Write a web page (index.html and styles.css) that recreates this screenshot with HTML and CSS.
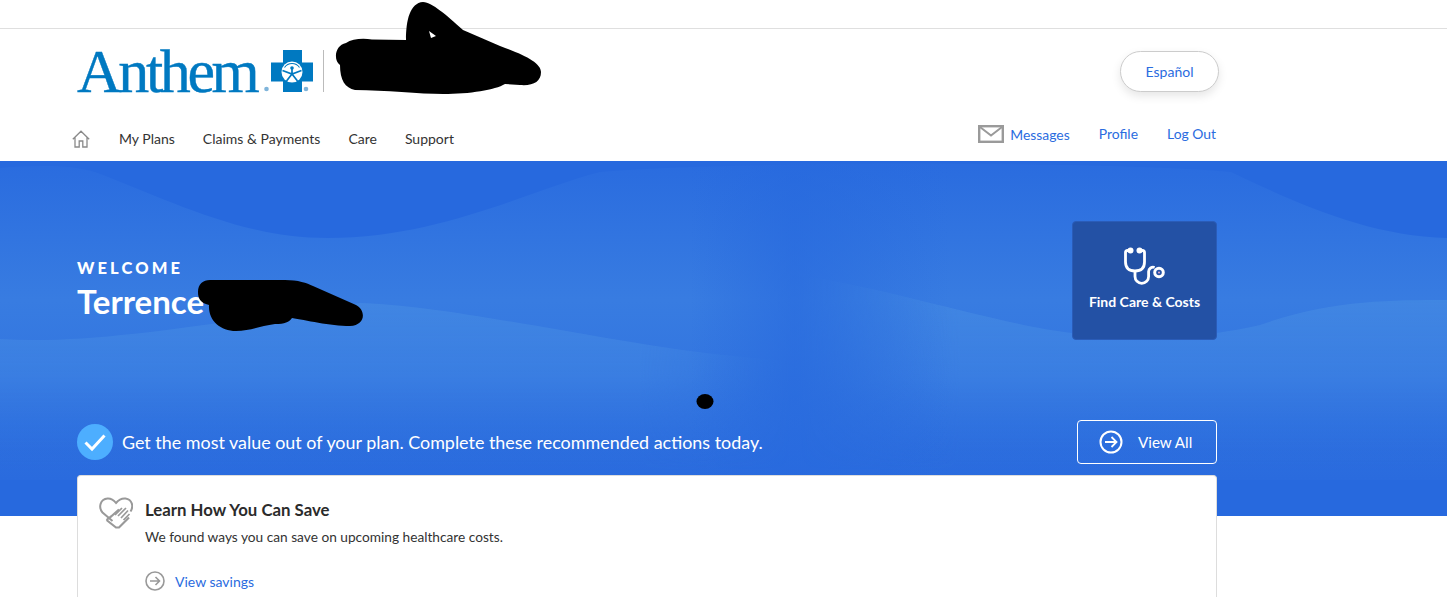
FILE: index.html
```html
<!DOCTYPE html>
<html>
  <head>
    <meta charset="utf-8" />
    <title>Anthem</title>
    <link rel="stylesheet" href="styles.css">
  </head>
  <body>
    <div class="topStrip"></div>

    <header class="header">
      <div class="wrap brandRow">
        <div class="brand">
          <span class="logoText">Anthem</span>
          <svg class="logoCross" width="58" height="42" viewBox="-8 0 58 42">
            <circle cx="-4.500" cy="39" r="2.300" fill="#7fb4da"/>
            <path d="M12 0h19v12.500h11v19h-11v10.500h-19v-10.500h-12v-19h12z" fill="#0079c1"/>
            <circle cx="21" cy="22" r="10.500" fill="#fff"/>
            <path d="M13.500 17.500a9 9 0 0 1 15 0" fill="none" stroke="#0079c1" stroke-width="1.100"/>
            <path d="M11.500 20.500 21 24l9.500-3.500M21 18v6M21 24l-5.500 7M21 24l5.500 7" fill="none" stroke="#0079c1" stroke-width="1.700"/>
            <circle cx="21" cy="18" r="1.800" fill="#0079c1"/>
            <circle cx="35" cy="39" r="2.300" fill="#7fb4da"/>
          </svg>
          <span class="brandLine"></span>
        </div>
        <button class="langBtn">Español</button>
      </div>

      <div class="wrap navRow">
        <nav class="mainNav">
          <svg class="homeIcon" width="18" height="18" viewBox="0 0 18 18">
            <path d="M.8 9.200 9 1.200l8.200 8M3 7.500v9.500h4.200v-6h3.600v6h4.200v-9.500" fill="none" stroke="#8a8a8a" stroke-width="1.300"/>
          </svg>
          <a href="#">My Plans</a>
          <a href="#">Claims &amp; Payments</a>
          <a href="#">Care</a>
          <a href="#">Support</a>
        </nav>
        <div class="userNav">
          <a href="#" class="msgLink">
            <svg width="26" height="18" viewBox="0 0 26 18">
              <rect x="1.200" y="1.200" width="23.600" height="15.600" fill="none" stroke="#9a9a9a" stroke-width="2.400"/>
              <path d="M2 2l11 8.500L24 2" fill="none" stroke="#9a9a9a" stroke-width="2"/>
            </svg>
            <span>Messages</span>
          </a>
          <a href="#">Profile</a>
          <a href="#">Log Out</a>
        </div>
      </div>
    </header>

    <section class="hero">
      <svg class="heroBg" width="1447" height="355" viewBox="0 161 1447 355" preserveAspectRatio="none">
        <defs>
          <linearGradient id="bandFade" x1="0" y1="165" x2="0" y2="480" gradientUnits="userSpaceOnUse">
            <stop offset="0" stop-color="#2a6cdf"/>
            <stop offset="0.43" stop-color="#387ce1"/>
            <stop offset="1" stop-color="#2a6bde"/>
          </linearGradient>
          <linearGradient id="lowFade" x1="0" y1="300" x2="0" y2="470" gradientUnits="userSpaceOnUse">
            <stop offset="0" stop-color="#4287e2" stop-opacity="0.9"/>
            <stop offset="0.45" stop-color="#3c80e2" stop-opacity="0.8"/>
            <stop offset="1" stop-color="#2a6bde" stop-opacity="0"/>
          </linearGradient>
          <linearGradient id="leftSide" x1="640" y1="0" x2="790" y2="0" gradientUnits="userSpaceOnUse">
            <stop offset="0" stop-color="#fff"/>
            <stop offset="1" stop-color="#000"/>
          </linearGradient>
          <linearGradient id="rightSide" x1="800" y1="0" x2="960" y2="0" gradientUnits="userSpaceOnUse">
            <stop offset="0" stop-color="#000"/>
            <stop offset="1" stop-color="#fff"/>
          </linearGradient>
          <linearGradient id="gap" x1="690" y1="0" x2="950" y2="0" gradientUnits="userSpaceOnUse">
            <stop offset="0" stop-color="#2769de" stop-opacity="0"/>
            <stop offset="0.4" stop-color="#2769de" stop-opacity="0.6"/>
            <stop offset="1" stop-color="#2769de" stop-opacity="0"/>
          </linearGradient>
          <mask id="leftMask" maskUnits="userSpaceOnUse" x="0" y="161" width="1447" height="355">
            <rect x="0" y="161" width="1447" height="355" fill="url(#leftSide)"/>
          </mask>
          <mask id="rightMask" maskUnits="userSpaceOnUse" x="0" y="161" width="1447" height="355">
            <rect x="0" y="161" width="1447" height="355" fill="url(#rightSide)"/>
          </mask>
        </defs>
        <rect x="0" y="161" width="1447" height="355" fill="#2769de"/>
        <path d="M0 168C40 165 70 165 95 172C170 200 240 238 328 238C440 238 530 190 600 172C700 162 1100 160 1231 172C1300 205 1370 236 1447 238V480H0Z" fill="url(#bandFade)"/>
        <path d="M0 339C90 345 200 325 360 303C450 305 620 345 724 355L800 362V480H0Z" fill="url(#lowFade)" mask="url(#leftMask)"/>
        <path d="M780 272C880 285 1000 325 1072 333C1140 345 1217 335 1260 325C1330 300 1390 300 1447 300V480H780Z" fill="url(#lowFade)" mask="url(#rightMask)"/>
        <rect x="690" y="161" width="260" height="320" fill="url(#gap)"/>
      </svg>

      <div class="wrap heroTop">
        <div class="greeting">
          <div class="welcome">WELCOME</div>
          <div class="name">Terrence</div>
        </div>
        <a href="#" class="findCare">
          <svg width="42" height="40" viewBox="0 0 42 40">
            <path d="M6 4.500H3.500Q1.500 4.500 1.500 6.500V16Q1.500 25 11 25T20.500 16V6.500Q20.500 4.500 18.500 4.500H16" fill="none" stroke="#fff" stroke-width="2.800" stroke-linecap="round"/>
            <circle cx="6.500" cy="4.500" r="3" fill="#fff"/>
            <circle cx="15.500" cy="4.500" r="3" fill="#fff"/>
            <path d="M11 25v5.500a6.800 6.800 0 0 0 13.600 0v-5a4.500 4.500 0 0 1 6-4" fill="none" stroke="#fff" stroke-width="2.800"/>
            <circle cx="35" cy="26.500" r="4.300" fill="none" stroke="#fff" stroke-width="3"/>
            <circle cx="35" cy="26.500" r="1" fill="#e9a9c8"/>
          </svg>
          <span>Find Care &amp; Costs</span>
        </a>
      </div>

      <div class="wrap actionRow">
        <div class="actionText">
          <svg width="36" height="36" viewBox="0 0 36 36">
            <circle cx="18" cy="18" r="18" fill="#4daeff"/>
            <path d="M8.500 18.500l6.500 6.500L27.500 11.500" fill="none" stroke="#fff" stroke-width="3"/>
          </svg>
          <span>Get the most value out of your plan. Complete these recommended actions today.</span>
        </div>
        <a href="#" class="viewAll">
          <svg width="24" height="24" viewBox="0 0 24 24">
            <circle cx="12" cy="12" r="10.500" fill="none" stroke="#fff" stroke-width="2"/>
            <path d="M6 12h11.500M12.500 7l5 5-5 5" fill="none" stroke="#fff" stroke-width="1.800"/>
          </svg>
          <span>View All</span>
        </a>
      </div>

      <div class="wrap card">
        <svg class="heartIcon" width="34" height="32" viewBox="0 0 34 32">
          <path d="M13.500 24 3.500 15.500C-1 10 1.500 2 8.500 1.500 12.500 1.200 15 3.500 17 6 19.500 3 22.500 1 26.500 1.500 33 2.500 35 9 31.500 14.500" fill="none" stroke="#999" stroke-width="2"/>
          <path d="M11 20.500 20 12.500M7.500 23 12.500 19M7.500 23 17 30.500 20 30.500 30 20.500" fill="none" stroke="#999" stroke-width="2.200"/>
          <path d="M19 19l8-8M22 21l7-7.500M24.500 23l6-6M16 18l7-7" fill="none" stroke="#999" stroke-width="1.700"/>
        </svg>
        <div class="cardBody">
          <h2>Learn How You Can Save</h2>
          <p>We found ways you can save on upcoming healthcare costs.</p>
          <a href="#" class="cardLink">
            <svg width="20" height="20" viewBox="0 0 20 20">
              <circle cx="10" cy="10" r="9" fill="none" stroke="#999" stroke-width="1.600"/>
              <path d="M5 10h9.500M10.500 6l4 4-4 4" fill="none" stroke="#999" stroke-width="1.600"/>
            </svg>
            <span>View savings</span>
          </a>
        </div>
      </div>
    </section>

    <!-- marker scribbles over the personal details -->
    <svg class="scribbles" width="1447" height="597" viewBox="0 0 1447 597">
      <path fill-rule="evenodd" d="M423 2C433 3 445 14 463 30L500 46C525 55 541 63 541 72C541 82 533 86 520 85L505 84C495 90 470 94 443 94C420 94 385 90 355 90C345 88 340 80 340 65C333 60 335 45 346 43C352 39 362 38 372 39.500L406 40C406 20 410 3 423 2ZM429 31 431 38 436 36Z" fill="#000"/>
      <path d="M198 292C198 284 203 280 210 280H285C298 280 307 283 313 286L356 305C366 310 366 325 350 326C330 326 305 320 292 318C289 322 285 324 275 324C260 326 250 331 236 331C220 331 208 320 209 305C200 303 198 298 198 292Z" fill="#000"/>
      <ellipse cx="705" cy="401.500" rx="8.500" ry="7.500" fill="#000"/>
    </svg>
  </body>
</html>
```

FILE: styles.css
```css
html {
  background-color: white;
  color: #333;
  font-family: "Lato", "Liberation Sans", sans-serif;
}

body {
  margin: 0;
  height: 597px;
  overflow: hidden;
  position: relative;
}

a {
  color: #2a6ce0;
  text-decoration: none;
}

.wrap {
  width: 1140px;
  margin-left: 77px;
}

.topStrip {
  height: 28px;
  border-bottom: 1px solid #dfdfdf;
}

.header {
  height: 132px;
}

.brandRow {
  display: flex;
  justify-content: space-between;
  padding-top: 21px;
  height: 42px;
}

.brand {
  display: flex;
  align-items: flex-start;
}

.logoText {
  font-family: "Liberation Serif", serif;
  font-size: 62px;
  line-height: 42px;
  height: 42px;
  width: 186px;
  letter-spacing: -3.400px;
  color: #0079c1;
  -webkit-text-stroke: 0.4px #0079c1;
}

.brandLine {
  width: 1px;
  height: 42px;
  background-color: #bbb;
  margin-left: 2px;
}

.langBtn {
  width: 99px;
  height: 41px;
  margin: 1px -2px 0 0;
  background: white;
  border: 1px solid #ccc;
  border-radius: 21px;
  box-shadow: 0 4px 10px rgba(0, 0, 0, 0.1);
  font: 14px "Lato", sans-serif;
  color: #2a6ce0;
}

.navRow {
  display: flex;
  justify-content: space-between;
}

.mainNav {
  display: flex;
  align-items: center;
  gap: 28px;
  margin-left: -5px;
  padding-top: 37px;
  font-size: 14px;
  line-height: 20px;
}

.mainNav a {
  color: #333;
}

.homeIcon {
  margin-right: 1px;
}

.userNav {
  display: flex;
  align-items: center;
  gap: 29px;
  padding-top: 32px;
  margin-right: 1px;
  font-size: 13.900px;
  line-height: 20px;
  height: 20px;
}

.msgLink {
  display: flex;
  align-items: center;
  gap: 6px;
}

.msgLink span {
  padding-top: 1px;
}

.hero {
  height: 355px;
  position: relative;
  color: white;
}

.heroBg {
  position: absolute;
  top: 0;
  left: 0;
}

.heroTop,
.actionRow,
.card {
  position: relative;
}

.heroTop {
  display: flex;
  justify-content: space-between;
  padding-top: 60px;
  height: 119px;
  margin-bottom: 80px;
}

.greeting {
  padding-top: 37px;
}

.welcome {
  font-size: 16.500px;
  font-weight: 900;
  letter-spacing: 3.100px;
  line-height: 20px;
}

.name {
  font-size: 33px;
  font-weight: 700;
  line-height: 38px;
  margin-top: 4px;
}

.findCare {
  width: 145px;
  height: 119px;
  box-sizing: border-box;
  padding-top: 24px;
  background-color: #2351a5;
  border: 1px solid #2a5cb8;
  border-radius: 4px;
  color: white;
  display: flex;
  flex-direction: column;
  align-items: center;
  font-size: 14px;
  font-weight: 700;
}

.findCare svg {
  margin-bottom: 7px;
}

.actionRow {
  display: flex;
  justify-content: space-between;
  height: 44px;
  margin-bottom: 11px;
}

.actionText {
  display: flex;
  align-items: center;
  gap: 9px;
  font-size: 17.920px;
}

.viewAll {
  width: 140px;
  height: 44px;
  box-sizing: border-box;
  border: 1px solid white;
  border-radius: 4px;
  color: white;
  display: flex;
  align-items: center;
  gap: 15px;
  padding-left: 21px;
  font-size: 15.200px;
}

.card {
  display: flex;
  height: 122px;
  box-sizing: border-box;
  background: white;
  border: 1px solid #ddd;
  border-bottom: none;
  border-radius: 4px 4px 0 0;
  padding: 21px 0 0 21px;
  color: #333;
}

.heartIcon {
  flex-shrink: 0;
  margin-right: 12px;
}

.cardBody h2 {
  margin: 2px 0 0;
  font-size: 16.800px;
  font-weight: 700;
  line-height: 22px;
  color: #2b2b2b;
}

.cardBody p {
  margin: 6px 0 0;
  font-size: 13.700px;
  line-height: 20px;
}

.cardLink {
  display: flex;
  align-items: center;
  gap: 10px;
  margin-top: 24px;
  font-size: 14px;
}

.scribbles {
  position: absolute;
  top: 0;
  left: 0;
  pointer-events: none;
}
```
